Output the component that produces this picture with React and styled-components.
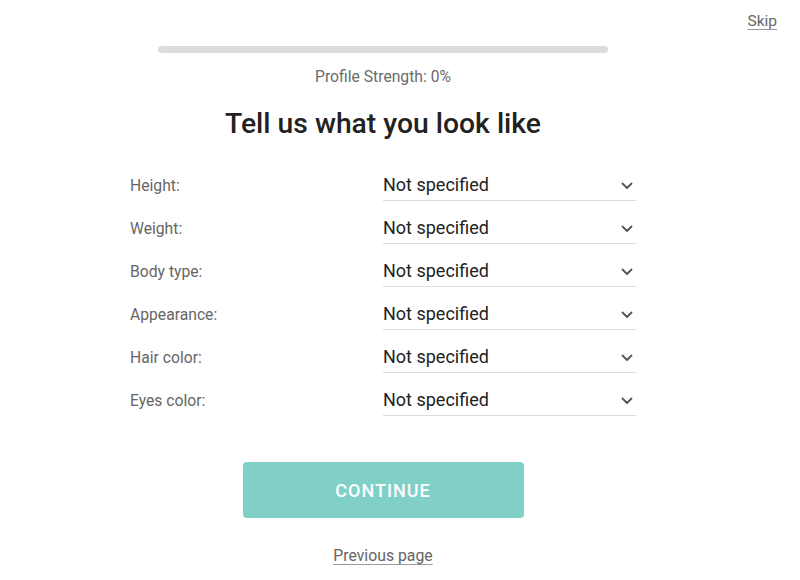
import React from "react";
import styled, { createGlobalStyle } from "styled-components";

const Global = createGlobalStyle`
  html, body { margin: 0; padding: 0; background: #fff; }
  body { font-family: Roboto, "Liberation Sans", Arial, sans-serif; }
`;

const Page = styled.div`
  width: 766px;
  padding-top: 11px;
  display: flex;
  flex-direction: column;
  align-items: center;
`;

const TopBar = styled.div`
  align-self: stretch;
  display: flex;
  justify-content: flex-end;
  margin-right: -11px;
`;

const LinkText = styled.a`
  font-size: ${(p) => p.$size || 15.5}px;
  line-height: 20px;
  color: #666;
  text-decoration: underline;
  text-decoration-color: #999;
  text-underline-offset: 3px;
  cursor: pointer;
`;

const Track = styled.div`
  width: 450px;
  height: 7px;
  border-radius: 4px;
  background: #dcdcdc;
  margin-top: 15px;
`;

const Strength = styled.div`
  margin-top: 15px;
  font-size: 15.7px;
  line-height: 18px;
  color: #6b6b6b;
`;

const Title = styled.h1`
  margin: 22px 0 0;
  font-size: 28.3px;
  line-height: 32px;
  font-weight: 500;
  color: #222;
`;

const Form = styled.div`
  margin-top: 18px;
  width: 506px;
  display: flex;
  flex-direction: column;
`;

const Row = styled.div`
  display: grid;
  grid-template-columns: 253px 253px;
  height: 43px;
`;

const Label = styled.div`
  padding-top: 16px;
  font-size: 15.7px;
  line-height: 24px;
  color: #666;
`;

const Select = styled.div`
  display: flex;
  align-items: flex-start;
  justify-content: space-between;
  padding-top: 15px;
  border-bottom: 1px solid #dcdcdc;
  box-sizing: border-box;
  height: 43px;
`;

const Value = styled.span`
  font-size: 18px;
  line-height: 24px;
  color: #222;
`;

const Chevron = styled.svg`
  width: 12px;
  height: 8px;
  margin-top: 9px;
  margin-right: 3px;
`;

const Button = styled.button`
  margin-top: 46px;
  width: 281px;
  height: 56px;
  border: none;
  border-radius: 4px;
  background: #80d0c8;
  color: #fff;
  font-family: inherit;
  font-size: 18px;
  font-weight: 500;
  letter-spacing: 1px;
  cursor: pointer;
`;

const Footer = styled.div`
  margin-top: 28px;
`;

const fields = ["Height:", "Weight:", "Body type:", "Appearance:", "Hair color:", "Eyes color:"];

export default function App() {
  return (
    <>
      <Global />
      <Page>
        <TopBar>
          <LinkText>Skip</LinkText>
        </TopBar>
        <Track />
        <Strength>Profile Strength: 0%</Strength>
        <Title>Tell us what you look like</Title>
        <Form>
          {fields.map((f) => (
            <Row key={f}>
              <Label>{f}</Label>
              <Select>
                <Value>Not specified</Value>
                <Chevron viewBox="0 0 12 8">
                  <path d="M1.5 1.5 L6 6 L10.5 1.5" fill="none" stroke="#555" strokeWidth="1.8" strokeLinecap="round" strokeLinejoin="round" />
                </Chevron>
              </Select>
            </Row>
          ))}
        </Form>
        <Button>CONTINUE</Button>
        <Footer>
          <LinkText $size={15.8}>Previous page</LinkText>
        </Footer>
      </Page>
    </>
  );
}
